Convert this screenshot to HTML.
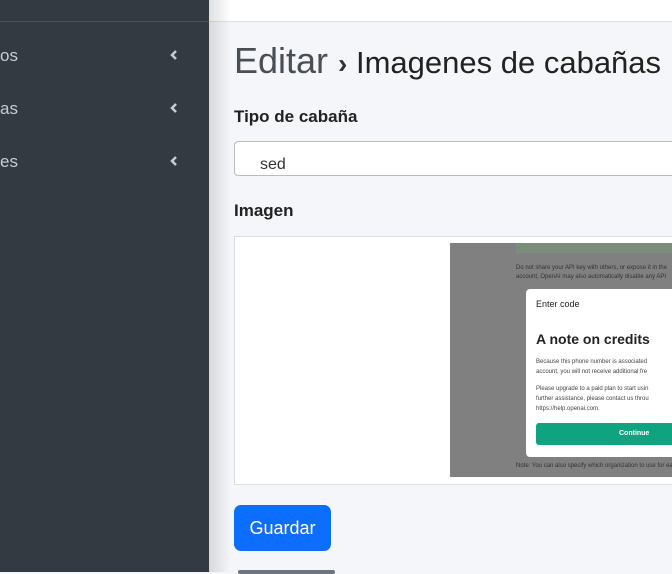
<!DOCTYPE html><html><head><style>
body{margin:0;width:672px;height:572px;overflow:hidden;background:#f4f6f9;font-family:"Liberation Sans",sans-serif;position:relative}
.sb{position:absolute;left:0;top:0;width:209px;height:572px;background:#343a42}
.sb .line{position:absolute;top:21px;left:0;width:209px;height:1px;background:#4b545c}
.it{position:absolute;left:0;color:#c8ccd0;font-size:17px}
.ch{position:absolute;left:169px}
.top{position:absolute;left:209px;top:0;width:463px;height:21px;background:#fff;border-bottom:1px solid #dee2e6}
.sh{position:absolute;left:209px;top:0;width:22px;height:572px;background:linear-gradient(90deg,rgba(0,0,0,.12),rgba(0,0,0,0))}
</style></head><body>
<div class="top"></div>
<div class="sb"><div class="line"></div>
<div class="it" style="top:46px">os</div><svg class="ch" style="top:49px" width="10" height="12"><path d="M7 2 L3 6 L7 10" stroke="#c8ccd0" stroke-width="2.5" fill="none"/></svg>
<div class="it" style="top:99px">as</div><svg class="ch" style="top:102px" width="10" height="12"><path d="M7 2 L3 6 L7 10" stroke="#c8ccd0" stroke-width="2.5" fill="none"/></svg>
<div class="it" style="top:152px">es</div><svg class="ch" style="top:155px" width="10" height="12"><path d="M7 2 L3 6 L7 10" stroke="#c8ccd0" stroke-width="2.5" fill="none"/></svg>
</div>
<div class="sh"></div>
<div style="position:absolute;left:234px;top:40px;font-size:36px;color:#4a4f55;white-space:nowrap">Editar <span style="font-size:28px;font-weight:bold;color:#333">›</span><span style="font-size:31px;color:#222"> Imagenes de cabañas</span></div>
<div style="position:absolute;left:234px;top:107px;font-size:17px;font-weight:bold;color:#222">Tipo de cabaña</div>
<div style="position:absolute;left:234px;top:141px;width:450px;height:33px;background:#fff;border:1px solid #bbb;border-radius:4px"><span style="position:absolute;left:25px;top:14px;font-size:16px;color:#333">sed</span></div>
<div style="position:absolute;left:234px;top:201px;font-size:17px;font-weight:bold;color:#222">Imagen</div>
<div style="position:absolute;left:234px;top:236px;width:450px;height:247px;background:#fff;border:1px solid #ddd"></div>
<div style="position:absolute;left:450px;top:243px;width:222px;height:234px;background:#808080;font-size:6px;color:#333">
<div style="position:absolute;left:66px;top:0;width:160px;height:10px;background:#7a8c7a"></div>
<div style="position:absolute;left:66px;top:22px;white-space:nowrap">Do not share your API key with others, or expose it in the</div>
<div style="position:absolute;left:66px;top:31px;white-space:nowrap">account, OpenAI may also automatically disable any API</div>
<div style="position:absolute;left:66px;top:220px;white-space:nowrap">Note: You can also specify which organization to use for ea</div>
<div style="position:absolute;left:76px;top:46px;width:150px;height:168px;background:#fff;border-radius:4px;color:#222">
<div style="position:absolute;left:10px;top:10px;font-size:9px">Enter code</div>
<div style="position:absolute;left:10px;top:42px;font-size:14px;font-weight:bold;white-space:nowrap">A note on credits</div>
<div style="position:absolute;left:10px;top:68px;font-size:6px;line-height:10px;white-space:nowrap;color:#444">Because this phone number is associated<br>account, you will not receive additional fre</div>
<div style="position:absolute;left:10px;top:95px;font-size:6px;line-height:10px;white-space:nowrap;color:#444">Please upgrade to a paid plan to start usin<br>further assistance, please contact us throu<br>https://help.openai.com.</div>
<div style="position:absolute;left:10px;top:134px;width:150px;height:22px;background:#10a37f;border-radius:3px;color:#fff;font-size:7px;font-weight:bold;line-height:22px;text-indent:83px">Continue</div>
</div></div>
<div style="position:absolute;left:234px;top:505px;width:97px;height:46px;background:#0d6efd;border-radius:7px;color:#fff;font-size:18px;line-height:46px;text-align:center">Guardar</div>
<div style="position:absolute;left:238px;top:570px;width:97px;height:4px;background:#6c757d;border-radius:4px"></div>
</body></html>
